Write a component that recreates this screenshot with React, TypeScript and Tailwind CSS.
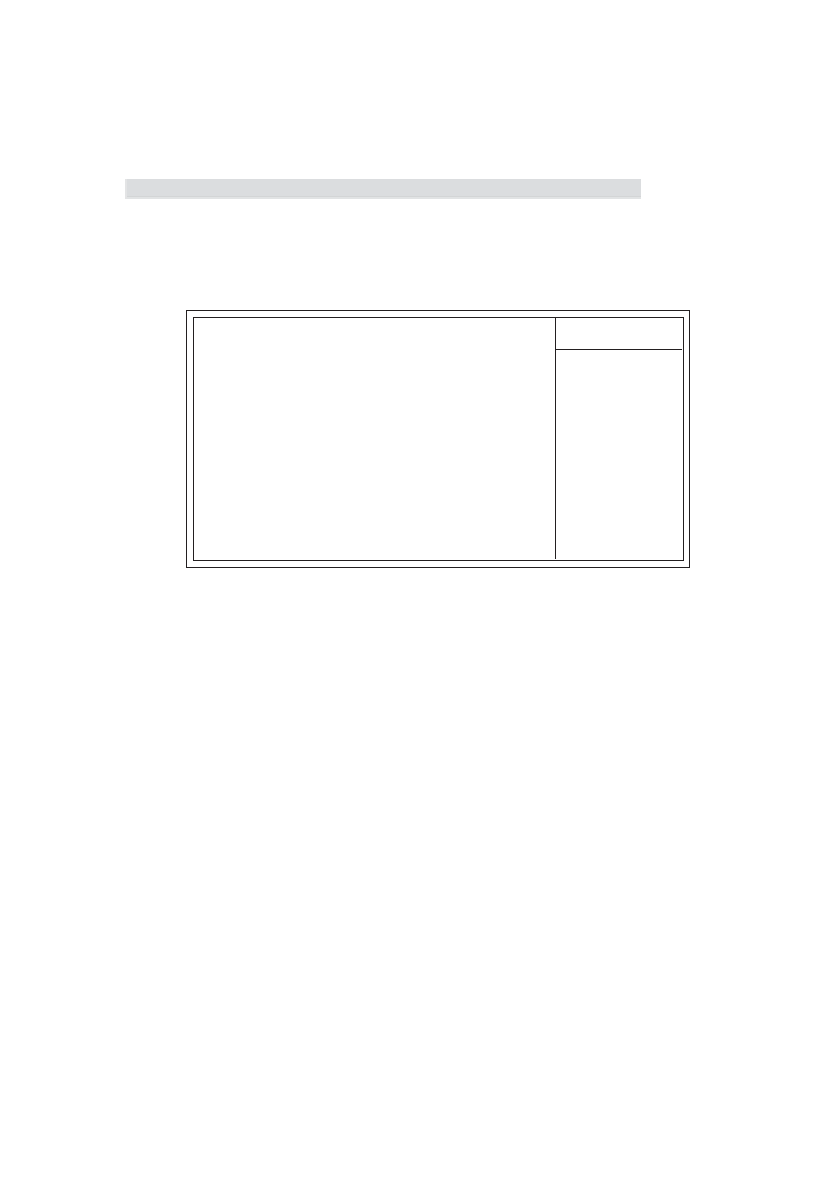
export default function App() {
  return (
    <main className="min-h-screen bg-white pt-[179px] pb-40">
      <header className="mr-[199px] ml-[125px] flex h-5 flex-col border-l-2 border-[#e3e4e5] bg-[#dbdddf]">
        <div className="flex-1" />
        <div className="h-px bg-[#d3d5d6]" />
        <div className="h-0.5 bg-[#e1e3e4]" />
      </header>

      <section className="mt-[111px] mr-[150px] ml-[186px] border border-[#231f20] py-1.5 pr-[5px] pl-1.5">
        <div className="flex min-h-[244px] border border-[#231f20]">
          <div className="flex-1" />
          <aside className="mb-px w-32 border-l border-[#231f20]">
            <div className="mr-px h-8 border-b border-[#231f20]" />
          </aside>
        </div>
      </section>
    </main>
  );
}
